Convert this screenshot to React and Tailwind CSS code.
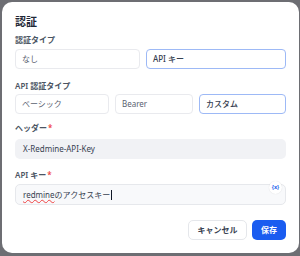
import React from 'react';

const FONT = { fontFamily: '"Noto Sans", "Noto Sans CJK JP", sans-serif' };

function Choice({ label, selected, className }) {
  return (
    <div
      className={`h-[20px] flex items-center px-[6px] rounded-[4px] text-[8px] ${
        selected
          ? 'border-[1.5px] border-[#9db9f6] text-[#374151] font-medium'
          : 'border border-[#e9eaee] text-[#5b6270]'
      } ${className}`}
    >
      {label}
    </div>
  );
}

function Label({ children, required, className }) {
  return (
    <div className={`h-[11px] leading-[11px] text-[8px] font-semibold text-[#4b5563] ${className}`}>
      {children}
      {required && <span className="text-[#ef4444] ml-[1px]">*</span>}
    </div>
  );
}

export default function App() {
  return (
    <div className="w-[300px] h-[256px] bg-[#6d6e73] pt-[2px] pl-[2px] overflow-hidden" style={FONT}>
      <div className="w-[297px] h-[251px] bg-white rounded-[10px] pl-[13px] pr-[13px] pt-[13px] flex flex-col">
        <h1 className="h-[14px] leading-[14px] text-[11px] font-bold text-[#1f2937]">認証</h1>

        <Label className="mt-[5px]">認証タイプ</Label>
        <div className="mt-[4px] flex gap-[6px]">
          <Choice label="なし" className="w-[125px]" />
          <Choice label="API キー" selected className="w-[140px]" />
        </div>

        <Label className="mt-[11px]">API 認証タイプ</Label>
        <div className="mt-[3px] flex gap-[6px]">
          <Choice label="ベーシック" className="w-[94px]" />
          <Choice label="Bearer" className="w-[78px]" />
          <Choice label="カスタム" selected className="w-[87px]" />
        </div>

        <Label required className="mt-[8px]">ヘッダー</Label>
        <div className="mt-[6px] h-[20px] w-[271px] rounded-[5px] bg-[#f1f2f5] flex items-center px-[8px] text-[8px] text-[#374151]">
          X-Redmine-API-Key
        </div>

        <Label required className="mt-[10px]">API キー</Label>
        <div className="relative mt-[4px] h-[21px] w-[271px] rounded-[5px] bg-[#f8f9fb] border border-[#e6e8ec] flex items-center px-[7px] text-[8px] text-[#374151]">
          <span className="underline decoration-wavy decoration-[#ef4444] decoration-[0.5px] underline-offset-[1px]">redmine</span>
          <span>のアクセスキー</span>
          <span className="w-[1px] h-[10px] bg-[#111827] ml-[1px]" />
          <div className="absolute -top-[4px] right-[3px] w-[13px] h-[13px] rounded-full bg-white shadow-[0_0_1px_rgba(0,0,0,0.15)] flex items-center justify-center text-[5.5px] font-bold text-[#2563eb]">
            {'{x}'}
          </div>
        </div>

        <div className="mt-[15px] flex justify-end gap-[5px]">
          <button className="h-[20px] w-[59px] rounded-[5px] border border-[#e5e7eb] bg-white text-[8px] font-semibold text-[#374151]">
            キャンセル
          </button>
          <button className="h-[20px] w-[34px] rounded-[5px] bg-[#1a5cf0] text-[8px] font-semibold text-white">
            保存
          </button>
        </div>
      </div>
    </div>
  );
}
